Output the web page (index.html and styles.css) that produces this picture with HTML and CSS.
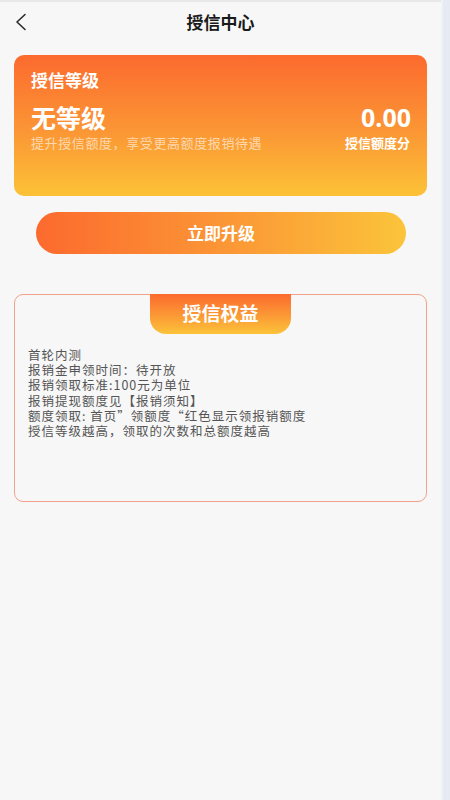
FILE: index.html
```html
<!DOCTYPE html>
<html lang="zh-CN">
<head>
<meta charset="utf-8">
<meta name="viewport" content="width=device-width, initial-scale=1">
<title>授信中心</title>
<link rel="stylesheet" href="styles.css">
</head>
<body>
<div class="page">
  <header class="header">
    <span class="back">
      <svg width="14" height="18" viewBox="0 0 14 18" fill="none"><path d="M11 1.5 L3 9 L11 16.5" stroke="#2b2b2b" stroke-width="1.6" stroke-linecap="round" stroke-linejoin="round"/></svg>
    </span>
    <h1 class="title">授信中心</h1>
  </header>

  <section class="card">
    <div class="card-label">授信等级</div>
    <div class="card-row">
      <div class="level">无等级</div>
      <div class="amount">0.00</div>
    </div>
    <div class="card-row card-row-sub">
      <div class="sub">提升授信额度，享受更高额度报销待遇</div>
      <div class="amount-label">授信额度分</div>
    </div>
  </section>

  <button class="upgrade">立即升级</button>

  <section class="benefits">
    <div class="tab">授信权益</div>
    <div class="lines">
      <div>首轮内测</div>
      <div>报销金申领时间：待开放</div>
      <div>报销领取标准:100元为单位</div>
      <div>报销提现额度见【报销须知】</div>
      <div>额度领取: 首页”领额度“红色显示领报销额度</div>
      <div>授信等级越高，领取的次数和总额度越高</div>
    </div>
  </section>
</div>
<div class="scrollbar"></div>
</body>
</html>
```

FILE: styles.css
```css
html, body {
  margin: 0;
  padding: 0;
}
body {
  display: flex;
  min-height: 800px;
  background: #f7f7f7;
  font-family: "Noto Sans CJK SC", "Noto Sans", sans-serif;
  color: #333;
}
.page {
  width: 441px;
  flex: none;
  border-top: 2px solid #e8e8e8;
  box-sizing: border-box;
}
.scrollbar {
  flex: 1;
  border-left: 2px solid #f1f2f6;
  background: #e6eaf2;
}
.header {
  height: 42px;
  display: flex;
  align-items: center;
  justify-content: center;
  position: relative;
}
.back {
  position: absolute;
  left: 14px;
  top: 11px;
  display: flex;
}
.title {
  margin: 0 0 2px 0;
  font-size: 17px;
  font-weight: 700;
  color: #1a1a1a;
  line-height: 24px;
}
.card {
  margin: 11px 14px 0 14px;
  height: 141px;
  box-sizing: border-box;
  border-radius: 10px;
  padding: 12px 17px 0 17px;
  background: linear-gradient(180deg, #fc6a2e 0%, #fb9735 55%, #fcc236 100%);
  color: #fff;
}
.card-label {
  font-size: 17px;
  font-weight: 700;
  line-height: 26px;
}
.card-row {
  display: flex;
  justify-content: space-between;
  align-items: center;
  margin-top: 9px;
}
.level {
  font-size: 25px;
  font-weight: 700;
  line-height: 30px;
}
.amount {
  font-family: "Noto Sans", "Open Sans", sans-serif;
  font-size: 25px;
  font-weight: 700;
  line-height: 30px;
  margin-right: -1px;
}
.card-row-sub {
  margin-top: 1px;
}
.sub {
  font-size: 13px;
  letter-spacing: 0.6px;
  line-height: 20px;
  color: rgba(255, 255, 255, 0.6);
}
.amount-label {
  font-size: 13px;
  font-weight: 700;
  line-height: 20px;
  color: #fff;
}
.upgrade {
  display: block;
  margin: 16px 35px 0 36px;
  width: 370px;
  height: 42px;
  border: none;
  border-radius: 21px;
  background: linear-gradient(90deg, #fc6a2e 0%, #fb9a36 55%, #fbc43a 100%);
  color: #fff;
  font-family: "Noto Sans CJK SC", sans-serif;
  font-size: 17px;
  font-weight: 700;
  padding: 0 0 2px 0;
}
.benefits {
  margin: 40px 14px 0 14px;
  height: 208px;
  box-sizing: border-box;
  border: 1px solid #f2a28c;
  border-radius: 9px;
}
.tab {
  width: 141px;
  height: 40px;
  margin: -1px auto 0 auto;
  border-radius: 0 0 16px 16px;
  background: linear-gradient(180deg, #fc6a2e 0%, #fb9a35 55%, #fcc33a 100%);
  color: #fff;
  font-size: 19px;
  font-weight: 700;
  display: flex;
  align-items: center;
  justify-content: center;
  padding-bottom: 3px;
  box-sizing: border-box;
}
.lines {
  padding: 13px 13px 0 13px;
  font-size: 12.5px;
  letter-spacing: 1px;
  line-height: 15.2px;
  color: #555;
}
```
